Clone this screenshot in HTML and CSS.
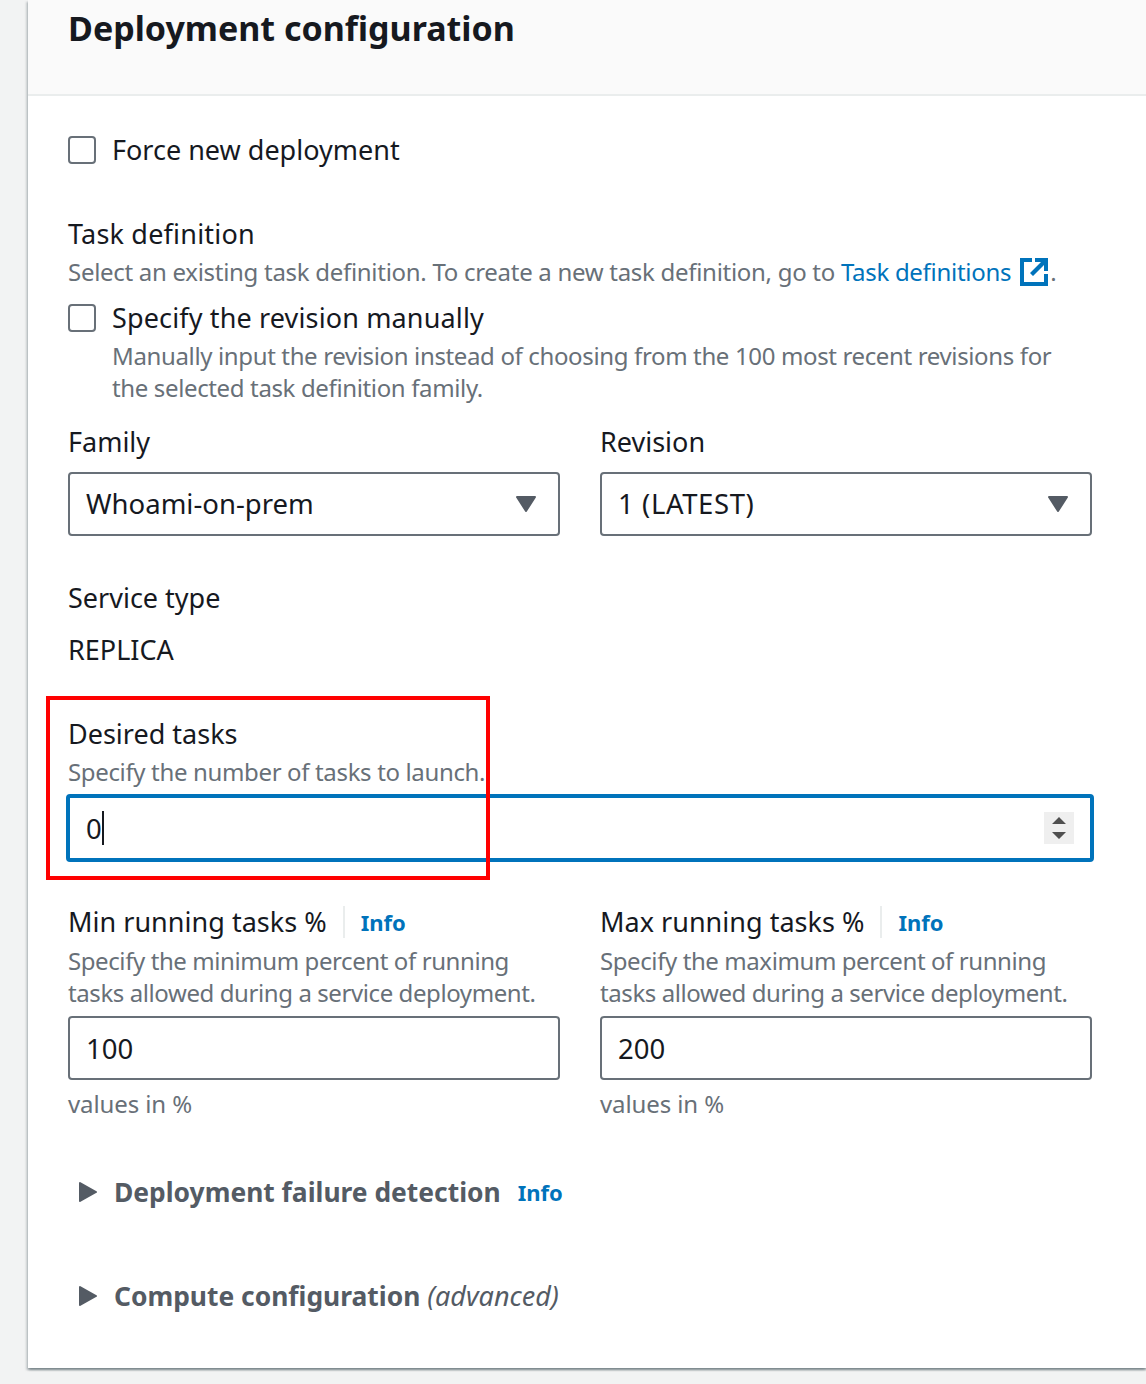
FILE: index.html
```html
<!DOCTYPE html>
<html lang="en">
<head>
    <meta charset="UTF-8">
    <meta name="viewport" content="width=device-width, initial-scale=1.0">
    <title>Deployment configuration</title>
    <link rel="stylesheet" href="styles.css">
</head>

<body>
    <section class="panel">
        <header class="panel-header">
            <h2>Deployment configuration</h2>
        </header>

        <div class="panel-body">
            <!-- Force new deployment -->
            <div class="check-row force-row">
                <span class="checkbox"></span>
                <span class="check-label">Force new deployment</span>
            </div>

            <!-- Task definition -->
            <div class="label task-label">Task definition</div>
            <div class="desc desc-gap task-desc">Select an existing task definition. To create a new task definition, go to <a class="link" href="#">Task definitions</a><svg class="ext-icon" viewBox="0 0 28 28"><path d="M12 2H2V26H26V16" fill="none" stroke="#0073bb" stroke-width="4"/><path d="M15 0H28V13H24V7L13 18L10 15L21 4H15Z" fill="#0073bb"/></svg>.</div>

            <div class="check-row specify-row">
                <span class="checkbox"></span>
                <span class="check-label">Specify the revision manually</span>
            </div>
            <div class="desc specify-desc">Manually input the revision instead of choosing from the 100 most recent revisions for the selected task definition family.</div>

            <div class="two-col family-row">
                <div>
                    <div class="label">Family</div>
                    <div class="field select-field">
                        <span class="select-text">Whoami-on-prem</span>
                        <svg class="caret" viewBox="0 0 20 16"><path d="M1 1H19L10 15Z" fill="#545b64" stroke="#545b64" stroke-width="2" stroke-linejoin="round"/></svg>
                    </div>
                </div>
                <div>
                    <div class="label">Revision</div>
                    <div class="field select-field">
                        <span class="select-text revision-text">1 (LATEST)</span>
                        <svg class="caret" viewBox="0 0 20 16"><path d="M1 1H19L10 15Z" fill="#545b64" stroke="#545b64" stroke-width="2" stroke-linejoin="round"/></svg>
                    </div>
                </div>
            </div>

            <!-- Service type -->
            <div class="label service-label">Service type</div>
            <div class="value">REPLICA</div>

            <!-- Desired tasks -->
            <div class="desired">
                <div class="label">Desired tasks</div>
                <div class="desc desc-gap">Specify the number of tasks to launch.</div>
                <div class="field number-field">
                    <span>0</span><span class="text-cursor"></span>
                    <span class="spinner">
                        <svg viewBox="0 0 14 22"><path d="M7 0L14 7H0Z M0 15H14L7 22Z" fill="#4f4f4f"/></svg>
                    </span>
                </div>
                <div class="highlight"></div>
            </div>

            <div class="two-col min-max-row">
                <div>
                    <div class="label-row">
                        <span class="label">Min running tasks %</span>
                        <a class="info info-split" href="#">Info</a>
                    </div>
                    <div class="desc help-text">Specify the minimum percent of running tasks allowed during a service deployment.</div>
                    <div class="field">100</div>
                    <div class="desc hint">values in %</div>
                </div>
                <div>
                    <div class="label-row">
                        <span class="label">Max running tasks %</span>
                        <a class="info info-split" href="#">Info</a>
                    </div>
                    <div class="desc help-text">Specify the maximum percent of running tasks allowed during a service deployment.</div>
                    <div class="field">200</div>
                    <div class="desc hint">values in %</div>
                </div>
            </div>

            <!-- Expandable sections -->
            <div class="expander failure-row">
                <svg class="expand-icon" viewBox="0 0 18 20"><path d="M1 1L17 10L1 19Z" fill="#545b64" stroke="#545b64" stroke-width="2" stroke-linejoin="round"/></svg>
                <span class="expand-title">Deployment failure detection</span>
                <a class="info" href="#">Info</a>
            </div>
            <div class="expander compute-row">
                <svg class="expand-icon" viewBox="0 0 18 20"><path d="M1 1L17 10L1 19Z" fill="#545b64" stroke="#545b64" stroke-width="2" stroke-linejoin="round"/></svg>
                <span class="expand-title">Compute configuration <i class="advanced">(advanced)</i></span>
            </div>
        </div>
    </section>
</body>
</html>
```

FILE: styles.css
```css
* {
    margin: 0;
    padding: 0;
    box-sizing: border-box;
    font-family: "Noto Sans", Arial, sans-serif;
}
body {
    background: #f2f3f3;
    color: #16191f;
    font-size: 27px;
    height: 1384px;
    overflow: hidden;
}
a {
    text-decoration: none;
}
.panel {
    margin-left: 28px;
    height: 1368px;
    background: #fff;
    box-shadow: 0 2px 2px 0 rgba(0, 28, 36, 0.3), 2px 2px 2px 0 rgba(0, 28, 36, 0.15), -2px 2px 2px 0 rgba(0, 28, 36, 0.15);
}
.panel-header {
    height: 96px;
    background: #fafafa;
    border-bottom: 2px solid #eaeded;
    padding-left: 40px;
}
.panel-header h2 {
    font-size: 34px;
    font-weight: 700;
    line-height: 56px;
}
.panel-body {
    padding: 38px 54px 0 40px;
}
.label,
.desc,
.value,
.check-label {
    line-height: 32px;
}
.desc {
    color: #687078;
    font-size: 24px;
    letter-spacing: -0.35px;
}
.desc-gap {
    margin-top: 6px;
}
.task-desc {
    letter-spacing: -0.29px;
}
.link {
    color: #0073bb;
}
.ext-icon {
    width: 28px;
    height: 28px;
    margin: 0 2px 0 9px;
    vertical-align: -5px;
}
.check-row {
    display: flex;
    align-items: center;
    gap: 16px;
}
.checkbox {
    width: 28px;
    height: 28px;
    border: 2px solid #687078;
    border-radius: 4px;
    flex: none;
}
.task-label {
    margin-top: 52px;
    letter-spacing: 0.2px;
}
.specify-row {
    margin-top: 14px;
    letter-spacing: 0.14px;
}
.specify-desc {
    margin: 6px 0 0 44px;
    letter-spacing: -0.36px;
}
.two-col {
    display: grid;
    grid-template-columns: 492px 492px;
    column-gap: 40px;
}
.family-row {
    margin-top: 22px;
}
.field {
    height: 64px;
    margin-top: 14px;
    padding: 0 16px;
    border: 2px solid #687078;
    border-radius: 4px;
    display: flex;
    align-items: center;
    font-size: 27.5px;
}
.select-field {
    justify-content: space-between;
}
.select-text {
    margin-bottom: 2px;
}
.revision-text {
    letter-spacing: 0.6px;
}
.caret {
    width: 20px;
    height: 16px;
    margin-right: 6px;
}
.service-label {
    margin-top: 46px;
}
.value {
    margin-top: 20px;
}
.desired {
    position: relative;
    margin-top: 52px;
}
.number-field {
    height: 68px;
    margin: 6px 0 0 -2px;
    width: 1028px;
    border: 4px solid #0073bb;
}
.text-cursor {
    width: 2px;
    height: 34px;
    background: #16191f;
}
.spinner {
    margin-left: auto;
    width: 30px;
    height: 32px;
    background: #efefef;
    display: flex;
    align-items: center;
    justify-content: center;
}
.spinner svg {
    width: 14px;
    height: 22px;
}
.highlight {
    position: absolute;
    left: -22px;
    top: -22px;
    width: 444px;
    height: 184px;
    border: 4px solid #f00;
}
.min-max-row {
    margin-top: 44px;
}
.label-row {
    display: flex;
    align-items: center;
    height: 32px;
}
.label-row .label {
    letter-spacing: 0.02px;
}
.info {
    color: #0073bb;
    font-size: 22px;
    font-weight: 700;
}
.info-split {
    margin-left: 16px;
    padding-left: 16px;
    border-left: 2px solid #eaeded;
    line-height: 32px;
}
.help-text {
    margin-top: 7px;
    letter-spacing: -0.41px;
}
.min-max-row .field {
    margin-top: 7px;
}
.hint {
    margin-top: 8px;
    letter-spacing: -0.1px;
}
.expander {
    display: flex;
    align-items: center;
    height: 32px;
    padding-left: 11px;
}
.failure-row {
    margin-top: 56px;
}
.compute-row {
    margin-top: 72px;
}
.compute-row .expand-title {
    margin-bottom: 2px;
}
.expand-icon {
    width: 18px;
    height: 20px;
    margin-right: 17px;
}
.expand-title {
    color: #545b64;
    font-size: 26.4px;
    font-weight: 700;
    margin-right: 17px;
}
.advanced {
    font-size: 27px;
    font-weight: 400;
}
```
